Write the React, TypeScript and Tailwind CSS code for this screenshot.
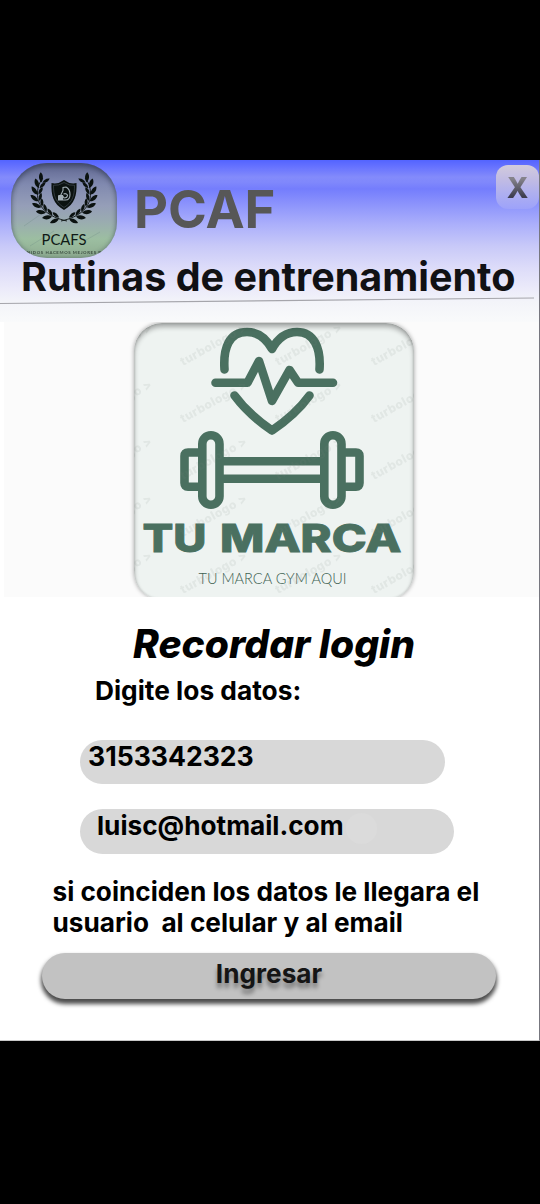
import React from "react";

const leafSteps = [101, 117, 133, 149, 165, 181, 197, 212];

function LaurelBranch() {
  return (
    <g>
      <path d="M67 221 C48 217 37 207 37.500 193 C37.500 187 40 181 43 178" fill="none" stroke="#0b1210" strokeWidth="0.9" />
      {leafSteps.map((deg) => {
        const a = (deg * Math.PI) / 180;
        const x = 64 + 26 * Math.cos(a);
        const y = 195 + 23.500 * Math.sin(a);
        return (
          <g key={deg} transform={`translate(${x} ${y}) rotate(${deg + 90})`} fill="#0b1210">
            <path d="M0 -0.500 C0.500 -4.500 4 -7 8 -6.500 C7.500 -3 4 -0.500 0 -0.500Z" />
            <path d="M0 0.500 C2 4 4.500 5 7.500 4.500 C6.500 1.500 3.500 0 0 0.500Z" />
          </g>
        );
      })}
    </g>
  );
}

function Badge() {
  return (
    <div className="h-[95px] w-[106px] shrink-0 overflow-hidden rounded-[36px] bg-[linear-gradient(180deg,#5d648e_0%,#8089af_22%,#959eb8_45%,#9aacb0_62%,#9cbea1_80%,#8eac90_100%)] shadow-[inset_0_3px_5px_rgba(30,40,60,0.4),inset_0_0_5px_rgba(50,60,80,0.35)]">
      <svg viewBox="11 163 106 95" className="block h-[95px] w-[106px]">
        <path d="M24 226 L44 212 M30 246 L54 231 M86 240 L100 232" stroke="#6f8c86" strokeWidth="1" opacity="0.3" />
        <LaurelBranch />
        <g transform="translate(128 0) scale(-1 1)">
          <LaurelBranch />
        </g>
        <path d="M64 180 Q70 184.500 76.500 183 C77 195 75 204 64 210 C53 204 51 195 51.500 183 Q58 184.500 64 180Z" fill="#0b1210" />
        <path d="M64 182.500 Q69.500 186 74.500 185.300 C74.500 195 73 202 64 207.500 C55 202 53.500 195 53.500 185.300 Q58.500 186 64 182.500Z" fill="none" stroke="#59636f" strokeWidth="0.5" />
        <path d="M58.500 195.500 H62.500 L64 198 Q67.500 198 67.500 195 Q66 193 63.500 194 M63 190.500 V187.500 L66 187 Q70 189 70 194.500 Q70 200 65.500 200 H58.500Z" fill="none" stroke="#a3aeb5" strokeWidth="1.1" />
        <rect x="58" y="195.500" width="5" height="4.500" fill="#a3aeb5" />
        <text x="41.500" y="244.700" fontFamily="Lato, sans-serif" fontSize="16" textLength="45" lengthAdjust="spacingAndGlyphs" fill="#101a16">PCAFS</text>
        <text x="27" y="254.300" fontFamily="Lato, sans-serif" fontWeight="700" fontSize="4.300" textLength="74" fill="#26352c" opacity="0.8">NIDOS HACEMOS MEJORES P</text>
      </svg>
    </div>
  );
}

const markColumns = [88, 183, 278, 374];
const markRows = [366, 423, 480, 537, 594];

function BrandCard() {
  return (
    <div className="relative h-[277px] w-[280px] shrink-0 overflow-hidden rounded-[28px] bg-[#eef3f1] shadow-[0_0_4px_rgba(0,0,0,0.35)]">
      <svg viewBox="134 323 280 277" className="block h-[277px] w-[280px]">
        <g fill="none" stroke="#4a7060" strokeWidth="8.600" strokeLinecap="round" strokeLinejoin="round">
          <path d="M224.500 369.500 C223 348 229 332 247 332 C258 332 266 338 272 349 C278 338 286 332 297 332 C314 332 321 348 319.500 369.500" />
          <path d="M215.500 382.700 H247.500 L259 361 L272 401 L289.500 370 L298 382.700 H333" />
          <path d="M234.500 395.500 C246 411 258 421 272 430.500 C286 421 299 410 309.500 395.500" />
          <rect x="202.300" y="435.300" width="17.200" height="69.500" rx="8.600" />
          <rect x="324.300" y="435.300" width="17.200" height="69.500" rx="8.600" />
        </g>
        <g fill="none" stroke="#4a7060" strokeWidth="8.600" strokeLinejoin="round">
          <path d="M200 452.500 H188 Q184.500 452.500 184.500 456 V483 Q184.500 486.800 188 486.800 H200" />
          <path d="M344 452.500 H356 Q359.500 452.500 359.500 456 V483 Q359.500 486.800 356 486.800 H344" />
          <path d="M222 461.300 H322 M222 478.700 H322" />
        </g>
        <g fontFamily="Inter, sans-serif" fontWeight="800" fontSize="38.500" fill="#4a7060" stroke="#4a7060" strokeWidth="0.9">
          <text x="142.500" y="552.300" textLength="64" lengthAdjust="spacingAndGlyphs">TU</text>
          <text x="220" y="552.300" textLength="181.500" lengthAdjust="spacingAndGlyphs">MARCA</text>
        </g>
        <text x="198.500" y="584" fontFamily="Lato, sans-serif" fontWeight="300" fontSize="16" textLength="148" lengthAdjust="spacingAndGlyphs" fill="#3d6152">TU MARCA GYM AQUI</text>
        <g fontFamily="Inter, sans-serif" fontWeight="800" fontSize="12" fill="#7d8783" opacity="0.11">
          {markColumns.map((x) =>
            markRows.map((y) => (
              <text key={`${x}-${y}`} transform={`translate(${x} ${y}) rotate(-29)`} textLength="74">turbologo &gt;</text>
            )),
          )}
        </g>
      </svg>
      <div className="pointer-events-none absolute inset-0 rounded-[28px] shadow-[inset_0_4px_5px_rgba(0,0,0,0.3),inset_0_0_3px_rgba(0,0,0,0.2)]" />
    </div>
  );
}

export default function App() {
  return (
    <div className="flex h-[1204px] w-[540px] flex-col bg-black pt-40 font-['Inter',sans-serif] text-black">
      <main className="flex h-[881px] flex-col overflow-hidden border-b border-r border-b-[#c8c8c8] border-r-[#77777f] bg-white">
        <header className="flex h-[162px] shrink-0 flex-col bg-[linear-gradient(180deg,#5364ff_0px,#6470ff_6px,#838bfb_17px,#8088fc_22px,#747dfd_29px,#8f96fc_46px,#acb0fb_65px,#c8c9f8_86px,#dddcf9_108px,#ebeafa_128px,#f3f4f9_142px,#f9fafb_162px)]">
          <div className="flex h-[97px] pl-[11px] pt-[3px]">
            <Badge />
            <h1 className="ml-[17px] mt-[15px] text-[52.5px] font-bold leading-[62px] text-[#575757]">PCAF</h1>
            <button className="ml-auto mt-[2px] h-[44px] w-[43px] rounded-[12px] bg-[linear-gradient(180deg,#d2cbdc_0%,#c0bbe4_35%,#aeaff0_65%,#9da2fa_100%)] pt-px text-[28.5px] font-extrabold leading-[43px]">
              <span className="bg-[linear-gradient(180deg,#85838b_25%,#3e3e50_75%)] bg-clip-text text-transparent">X</span>
            </button>
          </div>
          <h2 className="whitespace-nowrap pl-[21px] text-[39.5px] font-bold leading-[40px] text-[#111114]">Rutinas de entrenamiento</h2>
          <svg viewBox="0 0 539 8" className="block h-2 w-full shrink-0">
            <path d="M0 6.500 L534 1" stroke="#a5a5ab" strokeWidth="1.200" />
          </svg>
        </header>
        <section className="ml-1 flex h-[275px] shrink-0 overflow-hidden bg-[#fbfbfb] pl-[130px] pt-px">
          <BrandCard />
        </section>
        <form className="flex flex-col items-start">
          <h3 className="ml-[133px] mt-[26px] whitespace-nowrap text-[39px] font-extrabold italic leading-[41px]">Recordar login</h3>
          <p className="ml-[95px] mt-[11px] whitespace-nowrap text-[26.3px] font-bold leading-[31px]">Digite los datos:</p>
          <input defaultValue="3153342323" className="ml-20 mt-[34px] h-[44px] w-[365px] rounded-full bg-[#d8d8d8] pb-[13px] pl-[8px] text-[26.6px] font-bold outline-none" />
          <div className="relative ml-20 mt-[25px]">
            <input defaultValue="luisc@hotmail.com" className="block h-[45px] w-[374px] rounded-full bg-[#d8d8d8] pb-[12px] pl-[17px] text-[26.2px] font-bold outline-none" />
            <span className="absolute left-[266px] top-[4px] size-[31px] rounded-full bg-[#dbdbdb]" />
          </div>
          <p className="ml-[52.5px] mt-[22px] whitespace-pre text-[26.2px] font-bold leading-[31px]">{"si coinciden los datos le llegara el\nusuario  al celular y al email"}</p>
          <button type="button" className="ml-[42px] mt-[15px] h-[46px] w-[454px] rounded-full bg-[#c2c2c2] pb-[4px] text-[26.2px] font-bold text-[#151515] shadow-[0_4px_4px_1px_rgba(0,0,0,0.7)] [text-shadow:0_5px_4px_rgba(0,0,0,0.4)]">Ingresar</button>
        </form>
      </main>
    </div>
  );
}
